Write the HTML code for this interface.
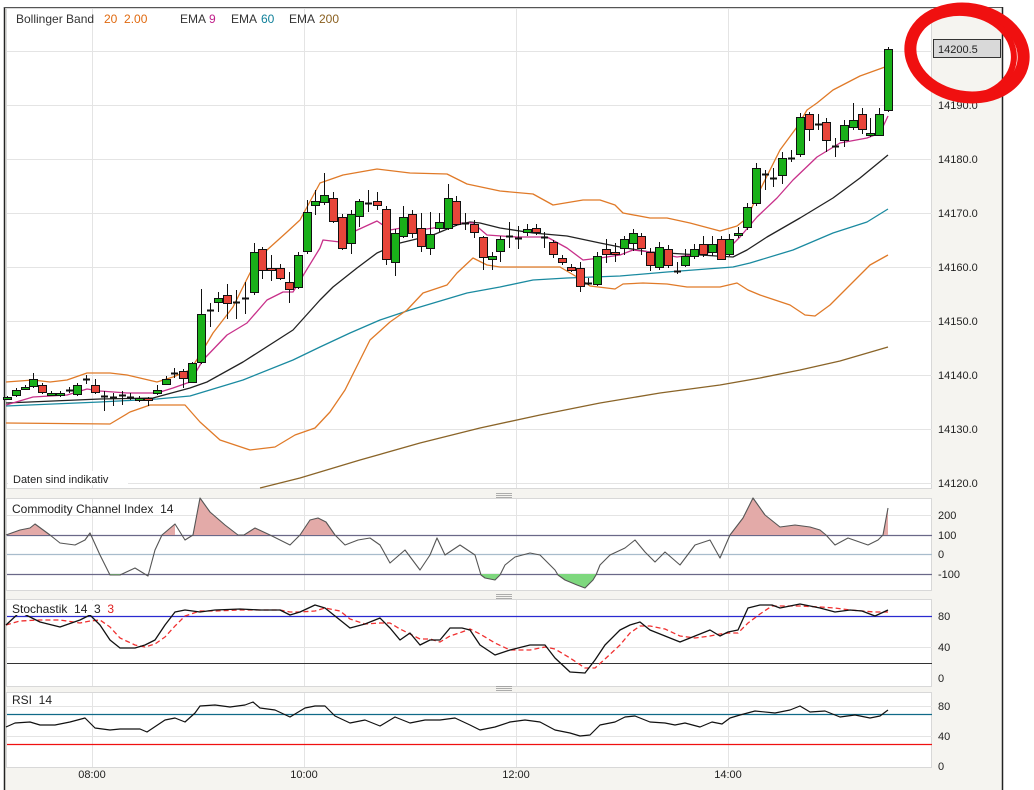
<!DOCTYPE html>
<html><head><meta charset="utf-8"><style>
html,body{margin:0;padding:0;background:#fff;width:1034px;height:790px;overflow:hidden}
svg{display:block;font-family:"Liberation Sans",sans-serif}
</style></head><body>
<svg id="s" width="1034" height="790" xmlns="http://www.w3.org/2000/svg"></svg>
<script>
var s=document.getElementById('s'),h='';
function R(x,y,w,hh,f,st){h+='<rect x="'+x+'" y="'+y+'" width="'+w+'" height="'+hh+'" fill="'+f+'"'+(st?' stroke="'+st+'" stroke-width="1"':'')+'/>';}
function L(x1,y1,x2,y2,c,w){h+='<line x1="'+x1+'" y1="'+y1+'" x2="'+x2+'" y2="'+y2+'" stroke="'+c+'" stroke-width="'+(w||1)+'"/>';}
function P(pts,c,w,extra){h+='<polyline fill="none" stroke="'+c+'" stroke-width="'+(w||1)+'" stroke-linejoin="round" '+(extra||'')+' points="'+pts.map(function(p){return p[0]+','+p[1]}).join(' ')+'"/>';}
function T(x,y,t,c,sz,anchor){h+='<text x="'+x+'" y="'+y+'" font-size="'+(sz||12)+'" fill="'+(c||'#222')+'"'+(anchor?' text-anchor="'+anchor+'"':'')+'>'+t+'</text>';}
R(4,7,998,783,'#f5f4f0');
L(4.5,7,4.5,790,'#222',1.5);L(4,7.5,1002,7.5,'#555',1);L(1002.5,7,1002.5,790,'#222',1.5);
var panels=[[8,488],[498,590],[599,686],[692,767]];
panels.forEach(function(p){R(6.5,p[0]+.5,925,p[1]-p[0],'#fff','#d8d8d8');});
[493,594,686].forEach(function(y){for(var j=0;j<3;j++)L(496,y+j*2+.5,512,y+j*2+.5,'#9a9a9a',0.8);});
[92,304,516,728].forEach(function(x){panels.forEach(function(p){L(x+.5,p[0]+1,x+.5,p[1],'#e4e4e4');});});
[51,105,159,213,267,321,375,429,483].forEach(function(y){L(7,y+.5,932,y+.5,'#e4e4e4');});
var pl=['14200.5','14190.0','14180.0','14170.0','14160.0','14150.0','14140.0','14130.0','14120.0'];
for(var i=1;i<9;i++)T(938,51+54*i+4,pl[i],'#222',11);
var ub=[[6,382],[33,380],[50,382],[67,380],[87,373],[110,373],[127,375],[157,382],[173,377],[190,370],[200,355],[213,333],[233,307],[250,273],[267,250],[287,232],[300,220],[320,183],[343,175],[377,169],[410,173],[447,174],[467,184],[500,191],[533,194],[553,205],[583,200],[600,200],[615,205],[623,213],[650,218],[667,218],[690,223],[720,231],[737,226],[747,218],[760,190],[780,150],[797,127],[807,110],[817,103],[833,90],[860,76],[885,67],[888,57]];
var lb=[[6,423],[110,424],[130,412],[150,405],[185,405],[200,422],[220,440],[250,450],[275,447],[295,435],[315,428],[330,412],[345,390],[360,360],[370,340],[390,322],[407,310],[423,293],[447,285],[457,273],[473,258],[487,265],[500,267],[560,267],[577,277],[590,286],[615,289],[623,284],[643,283],[667,284],[687,287],[720,287],[737,283],[748,290],[760,295],[790,305],[805,315],[815,316],[830,305],[850,285],[870,265],[888,255]];
var bl=[[6,403],[100,399],[153,398],[190,388],[207,382],[243,362],[293,330],[320,300],[333,287],[357,268],[377,253],[400,243],[433,235],[457,225],[470,222],[480,223],[500,228],[533,233],[567,236],[600,243],[620,247],[650,252],[700,255],[733,257],[747,250],[767,237],[800,218],[833,198],[860,178],[888,155]];
var te=[[6,406],[100,402],[157,399],[190,396],[243,380],[293,360],[320,347],[350,333],[380,320],[410,310],[467,293],[500,287],[533,280],[567,278],[620,276],[667,272],[733,267],[750,263],[793,250],[833,233],[867,222],[888,209]];
var mg=[[6,405],[33,397],[67,395],[87,389],[100,391],[127,393],[157,393],[173,388],[190,382],[203,360],[227,335],[247,323],[267,300],[283,292],[293,292],[320,248],[323,240],[340,242],[353,232],[377,221],[390,230],[407,227],[420,230],[440,227],[457,223],[473,223],[487,235],[517,237],[547,237],[567,248],[583,260],[600,258],[620,255],[633,250],[650,252],[677,257],[707,253],[730,247],[740,237],[757,217],[777,198],[793,180],[817,157],[840,143],[867,138],[880,133],[888,116]];
var br=[[260,488],[300,478],[360,460],[420,443],[480,428],[540,415],[600,403],[660,393],[720,385],[760,378],[800,370],[840,361],[888,347]];
P(br,'#8a6428',1.3);P(te,'#1a8aa0',1.3);P(ub,'#e07a28',1.3);P(lb,'#e07a28',1.3);P(bl,'#222',1.3);P(mg,'#c8308a',1.3);
var C=[[399,397,396,400],[395,390,388,397],[389,387,385,390],[386,379,373,388],[385,392,383,394],[395,393,391,396],[395,393,391,397],[390,390,387,393],[394,385,383,396],[379,379,375,384],[385,392,379,394],[396,396,391,411],[397,397,393,406],[395,395,391,405],[397,397,393,400],[400,398,396,402],[398,400,397,406],[393,390,385,395],[384,379,376,385],[373,373,368,378],[371,378,369,388],[382,363,362,383],[362,314,289,364],[310,310,303,327],[302,298,292,312],[295,303,284,319],[302,302,290,319],[298,298,282,314],[292,252,243,295],[249,270,247,279],[268,270,255,281],[268,278,264,280],[282,289,272,303],[287,255,252,289],[251,212,200,254],[205,201,190,215],[202,195,173,205],[198,221,192,223],[217,248,214,250],[243,214,210,254],[216,201,199,227],[203,203,190,212],[201,205,192,210],[209,259,206,265],[262,233,229,276],[236,217,206,238],[214,233,210,238],[228,246,213,252],[248,234,212,255],[228,222,213,232],[228,198,184,230],[201,224,196,226],[223,223,213,230],[224,232,220,238],[237,257,236,270],[259,256,252,270],[251,239,236,262],[236,236,222,248],[238,238,226,249],[232,229,224,236],[228,232,224,235],[237,237,232,248],[242,254,240,258],[258,262,255,265],[267,270,264,272],[268,286,262,292],[283,283,278,285],[284,256,252,286],[249,254,239,263],[252,254,243,262],[248,239,236,255],[243,233,229,251],[236,248,233,255],[252,265,248,271],[267,247,242,270],[249,265,245,268],[271,271,262,274],[265,256,249,267],[256,249,244,259],[244,254,236,257],[252,244,236,256],[239,259,236,260],[254,239,234,256],[235,233,227,238],[227,207,203,230],[203,168,163,206],[174,174,170,190],[178,178,168,187],[175,158,152,184],[159,158,150,162],[154,117,113,157],[114,129,112,141],[124,124,114,130],[122,140,118,152],[146,146,138,157],[140,125,120,147],[127,120,103,130],[114,129,108,134],[135,133,118,137],[135,114,108,136],[110,49,47,112]];
C.forEach(function(c,i){var x=Math.round(7+i*8.81);var o=c[0],cl=c[1];L(x+.5,c[2],x+.5,c[3],'#111',1);
var top=Math.min(o,cl),bh=Math.abs(o-cl);if(bh<2){L(x-3,top+.5,x+4,top+.5,'#111',2);}else{var col=cl<o?'#19b019':'#e8453a';R(x-3.5,top+.5,8,bh,col,'#111');}});
R(933.5,39.5,67,18,'#d9d9d9','#333');T(938,53,'14200.5','#222',11);
T(16,23,'Bollinger Band','#333',12);T(104,23,'20&#160;&#160;2.00','#e06a10',12);
T(180,23,'EMA','#333',12);T(209,23,'9','#c0208a',12);T(231,23,'EMA','#333',12);T(261,23,'60','#10809a',12);T(289,23,'EMA','#333',12);T(319,23,'200','#8a6020',12);
R(8,471,120,14,'#fff');T(13,483,'Daten sind indikativ','#222',11);
L(7,515.5,932,515.5,'#e4e4e4');L(7,535.5,932,535.5,'#6a6888',1.2);L(7,554.5,932,554.5,'#a8bccc',1.2);L(7,574.5,932,574.5,'#6a6888',1.2);
var cci=[[6,535],[20,530],[30,528],[35,524],[50,535],[60,543],[75,545],[85,540],[90,533],[100,555],[110,575],[120,575],[135,568],[148,576],[155,550],[162,535],[175,524],[185,540],[193,535],[200,498],[210,512],[225,525],[238,535],[244,535],[255,528],[270,535],[290,545],[300,535],[310,520],[318,518],[326,522],[335,535],[345,545],[358,540],[370,538],[380,545],[390,563],[405,550],[420,570],[430,555],[437,538],[445,555],[460,545],[475,555],[481,575],[485,578],[495,580],[500,575],[505,565],[515,557],[530,553],[540,555],[555,570],[558,575],[565,580],[577,585],[585,588],[593,580],[596,575],[600,565],[610,555],[625,548],[635,540],[645,552],[655,562],[665,552],[680,565],[695,545],[710,540],[720,558],[730,535],[743,518],[753,498],[765,515],[780,527],[795,525],[810,527],[820,530],[826,535],[835,545],[848,538],[868,545],[878,540],[883,535],[888,508]];
function fill(pts,lvl,above,col){var seg=[];for(var i=0;i<pts.length;i++){var p=pts[i];var inn=above?p[1]<=lvl:p[1]>=lvl;if(inn){seg.push(p);}else if(seg.length){flush();} }if(seg.length)flush();
function flush(){if(seg.length>1){var a=seg.map(function(p){return p[0]+','+p[1]}).join(' ');h+='<polygon fill="'+col+'" points="'+seg[0][0]+','+lvl+' '+a+' '+seg[seg.length-1][0]+','+lvl+'"/>';}seg=[];}}
fill(cci,535,true,'#e3aaa8');fill(cci,574,false,'#7ed87e');
P(cci,'#555',1.1);
T(12,513,'Commodity Channel Index&#160;&#160;14','#222',12);
T(938,519,'200','#222',11);T(938,539,'100','#222',11);T(938,558,'0','#222',11);T(938,578,'-100','#222',11);
L(7,647.5,932,647.5,'#e4e4e4');L(7,616.5,932,616.5,'#2a2ad0',1.2);L(7,663.5,932,663.5,'#333',1);
var k=[[6,625],[20,612],[40,622],[60,627],[80,620],[90,615],[100,625],[110,640],[120,648],[135,648],[145,645],[155,640],[165,625],[175,612],[185,610],[200,612],[215,610],[240,609],[260,610],[280,610],[290,615],[300,612],[315,605],[325,608],[340,620],[350,628],[365,624],[380,618],[390,628],[400,640],[410,633],[420,645],[430,640],[440,640],[450,628],[462,628],[470,630],[480,645],[495,655],[510,650],[530,645],[545,645],[555,658],[570,672],[585,673],[595,660],[605,645],[620,630],[630,625],[640,622],[650,630],[665,636],[680,642],[695,636],[710,630],[720,636],[728,632],[738,630],[748,608],[760,605],[772,605],[780,608],[800,604],[820,608],[835,612],[850,610],[862,611],[875,616],[888,610]];
var d=k.map(function(p,i){var q=k[Math.max(0,i-1)],r=k[Math.max(0,i-2)];return [p[0],Math.round((p[1]+q[1]+r[1])/3)];});
P(d,'#f03030',1.3,'stroke-dasharray="5,3"');P(k,'#111',1.3);
R(8,601,122,14,'#fff');T(12,613,'Stochastik&#160;&#160;14&#160;&#160;3&#160;&#160;<tspan fill="#e02020">3</tspan>','#222',12);
T(938,620,'80','#222',11);T(938,651,'40','#222',11);T(938,682,'0','#222',11);
L(7,706.5,932,706.5,'#e4e4e4');L(7,736.5,932,736.5,'#e4e4e4');L(7,714.5,932,714.5,'#106a88',1.3);L(7,744.5,932,744.5,'#f01010',1.3);
var rsi=[[6,727],[15,723],[30,722],[40,725],[55,725],[70,722],[85,718],[95,728],[110,730],[120,729],[140,729],[147,732],[165,720],[175,718],[185,722],[195,713],[200,706],[215,705],[230,707],[245,705],[253,702],[260,708],[275,710],[290,717],[305,708],[315,706],[325,706],[335,716],[350,723],[365,720],[380,726],[395,717],[410,723],[425,720],[440,720],[455,718],[470,725],[480,730],[495,727],[510,722],[525,720],[540,722],[555,730],[570,733],[580,736],[590,735],[600,725],[615,722],[625,717],[635,716],[650,722],[665,723],[675,725],[685,723],[700,727],[712,722],[722,724],[730,718],[740,715],[755,711],[775,713],[790,710],[800,706],[810,712],[825,711],[840,717],[855,715],[870,718],[880,716],[888,710]];
P(rsi,'#111',1.2);
R(8,694,48,12,'#fff');T(12,704,'RSI&#160;&#160;14','#222',12);
T(938,710,'80','#222',11);T(938,740,'40','#222',11);T(938,770,'0','#222',11);
T(92,778,'08:00','#222',11,'middle');T(304,778,'10:00','#222',11,'middle');T(516,778,'12:00','#222',11,'middle');T(728,778,'14:00','#222',11,'middle');
h+='<ellipse cx="967" cy="53" rx="57" ry="44" fill="none" stroke="#f01010" stroke-width="12" transform="rotate(10 967 53)"/>';
h+='<ellipse cx="962" cy="55" rx="52" ry="42" fill="none" stroke="#f01010" stroke-width="6" transform="rotate(6 962 55)"/>';
s.innerHTML=h;
</script>
</body></html>
